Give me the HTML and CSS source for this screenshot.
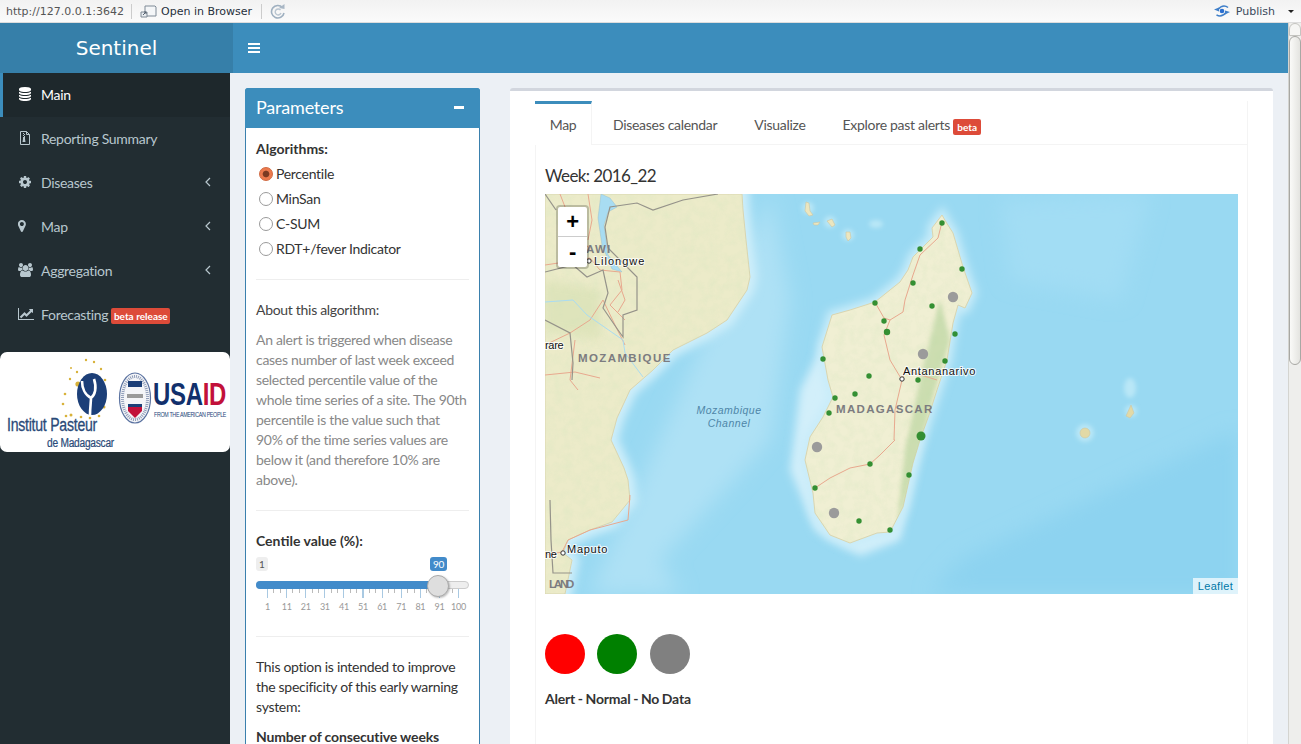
FILE: index.html
```html
<!DOCTYPE html>
<html lang="en">
<head>
  <meta charset="UTF-8" />
  <title>Sentinel</title>
  <link rel="stylesheet" href="styles.css">
</head>
<body>
  <div class="toolbar">
    <span class="tb-url">http://127.0.0.1:3642</span>
    <span class="tb-sep"></span>
    <svg class="tb-open" viewBox="0 0 17 14"><path d="M5 2h10l1 1v9H5z" fill="#f4f6f8" stroke="#7f8a96"/><path d="M1 8h6v5H1z" fill="#e8ecf0" stroke="#7f8a96"/><path d="M3 11l3-3M4 8h2v2" fill="none" stroke="#566270"/></svg>
    <span class="tb-label">Open in Browser</span>
    <span class="tb-sep tb-sep-2"></span>
    <svg class="tb-refresh" viewBox="0 0 16 16"><path d="M12.5 4.500A6.300 6.300 0 1 0 14 10" fill="none" stroke="#9fb0c0" stroke-width="1.600"/><path d="M10.500 7A3 3 0 1 0 11 10" fill="none" stroke="#b9c5d0" stroke-width="1.400"/><path d="M9 5l5.500 1V1z" fill="#a9b7c5"/></svg>
    <span class="tb-spacer"></span>
    <svg class="tb-publish" viewBox="0 0 16 12"><path d="M4 4.500C6 2 8 1 10 1c2 0 3 .6 4 1.500" fill="none" stroke="#3f7fc9" stroke-width="1.500"/><path d="M0 4.500L5 2.500V6.500z" fill="#3f7fc9"/><path d="M12 7.500C10 10 8 11 6 11c-1.500 0-2.500-.5-3.500-1.200" fill="none" stroke="#3f7fc9" stroke-width="1.500"/><path d="M16 7L11 5.500V9.500z" fill="#3f7fc9"/><circle cx="8" cy="6" r="2.300" fill="#2a6fd0"/></svg>
    <span class="tb-label tb-publish-label">Publish</span>
    <span class="tb-caret"></span>
  </div>

  <div class="shell">
    <div class="page">
      <header class="topbar">
        <div class="brand">Sentinel</div>
        <div class="navbar">
          <svg class="burger" viewBox="0 0 12 10"><path d="M0 0h12v2H0zM0 4h12v2H0zM0 8h12v2H0z" fill="#fff"/></svg>
        </div>
      </header>

      <div class="columns">
        <aside class="sidebar">
          <ul class="menu">
            <li class="menu-item active">
              <svg class="ico" viewBox="0 0 1792 1792"><path d="M896 768q237 0 443-43t325-127v170q0 69-103 128t-280 93.500-385 34.500-385-34.500-280-93.500-103-128v-170q119 84 325 127t443 43zm0 768q237 0 443-43t325-127v170q0 69-103 128t-280 93.500-385 34.500-385-34.500-280-93.500-103-128v-170q119 84 325 127t443 43zm0-384q237 0 443-43t325-127v170q0 69-103 128t-280 93.500-385 34.500-385-34.500-280-93.500-103-128v-170q119 84 325 127t443 43zm0-1152q208 0 385 34.500t280 93.500 103 128v128q0 69-103 128t-280 93.500-385 34.500-385-34.500-280-93.500-103-128v-128q0-69 103-128t280-93.500 385-34.500z"/></svg>
              <span>Main</span>
            </li>
            <li class="menu-item">
              <svg class="ico" viewBox="0 0 14 14"><path d="M2.500.5h6l3 3v10h-9z" fill="none" stroke="currentColor"/><path d="M8.500.5v3h3" fill="none" stroke="currentColor"/><path d="M5 2h1v1H5zM6 3h1v1H6zM5 4h1v1H5zM6 5h1v1H6zM5 6h2v2l.5 3h-3L5 8z"/></svg>
              <span>Reporting Summary</span>
            </li>
            <li class="menu-item">
              <svg class="ico" viewBox="0 0 1792 1792"><path d="M1152 896q0-106-75-181t-181-75-181 75-75 181 75 181 181 75 181-75 75-181zm512-109v222q0 12-8 23t-20 13l-185 28q-19 54-39 91 35 50 107 138 10 12 10 25t-9 23q-27 37-99 108t-94 71q-12 0-26-9l-138-108q-44 23-91 38-16 136-29 186-7 28-36 28h-222q-14 0-24.500-8.500t-11.500-21.500l-28-184q-49-16-90-37l-141 107q-10 9-25 9-14 0-25-11-126-114-165-168-7-10-7-23 0-12 8-23 15-21 51-66.500t54-70.500q-27-50-41-99l-183-27q-13-2-21-12.500t-8-23.500v-222q0-12 8-23t19-13l186-28q14-46 39-92-40-57-107-138-10-12-10-24 0-10 9-23 26-36 98.500-107.500t94.500-71.500q13 0 26 10l138 107q44-23 91-38 16-136 29-186 7-28 36-28h222q14 0 24.500 8.500t11.500 21.500l28 184q49 16 90 37l142-107q9-9 24-9 13 0 25 10 129 119 165 170 7 8 7 22 0 12-8 23-15 21-51 66.500t-54 70.500q26 50 41 98l183 28q13 2 21 12.500t8 23.500z"/></svg>
              <span>Diseases</span>
              <svg class="chev" viewBox="0 0 6 10"><path d="M5 1L1 5l4 4" fill="none" stroke="currentColor" stroke-width="1.200"/></svg>
            </li>
            <li class="menu-item">
              <svg class="ico" viewBox="0 0 1792 1792"><path d="M1152 640q0-106-75-181t-181-75-181 75-75 181 75 181 181 75 181-75 75-181zm256 0q0 109-33 179l-364 774q-16 33-47.500 52t-67.500 19-67.500-19-46.500-52l-365-774q-33-70-33-179 0-212 150-362t362-150 362 150 150 362z" transform="translate(-400 0)"/></svg>
              <span>Map</span>
              <svg class="chev" viewBox="0 0 6 10"><path d="M5 1L1 5l4 4" fill="none" stroke="currentColor" stroke-width="1.200"/></svg>
            </li>
            <li class="menu-item">
              <svg class="ico ico-wide" viewBox="0 0 1920 1792"><path d="M529 896q-162 5-265 128h-134q-82 0-138-40.500t-56-118.500q0-353 124-353 6 0 43.500 21t97.500 42.500 119 21.500q67 0 133-23-5 37-5 66 0 139 81 256zm1071 637q0 120-73 189.500t-194 69.500h-874q-121 0-194-69.500t-73-189.500q0-53 3.500-103.500t14-109 26.500-108.500 43-97.500 62-81 85.500-53.500 111.500-20q10 0 43 21.500t73 48 107 48 135 21.500 135-21.500 107-48 73-48 43-21.500q61 0 111.500 20t85.500 53.500 62 81 43 97.500 26.500 108.500 14 109 3.500 103.500zm-1024-1277q0 106-75 181t-181 75-181-75-75-181 75-181 181-75 181 75 75 181zm704 384q0 159-112.500 271.500t-271.500 112.500-271.500-112.500-112.500-271.500 112.500-271.500 271.500-112.500 271.500 112.500 112.500 271.500zm576 225q0 78-56 118.500t-138 40.500h-134q-103-123-265-128 81-117 81-256 0-29-5-66 66 23 133 23 59 0 119-21.500t97.500-42.500 43.500-21q124 0 124 353zm-128-609q0 106-75 181t-181 75-181-75-75-181 75-181 181-75 181 75 75 181z"/></svg>
              <span>Aggregation</span>
              <svg class="chev" viewBox="0 0 6 10"><path d="M5 1L1 5l4 4" fill="none" stroke="currentColor" stroke-width="1.200"/></svg>
            </li>
            <li class="menu-item">
              <svg class="ico ico-wide" viewBox="0 0 2048 1792"><path d="M2048 1536v128h-2048v-1536h128v1408h1920zm-128-1248v435q0 21-19.500 29.500t-35.500-7.500l-121-121-633 633q-10 10-23 10t-23-10l-233-233-416 416-192-192 585-585q10-10 23-10t23 10l233 233 464-464-121-121q-16-16-7.500-35.500t29.500-19.500h435q14 0 23 9t9 23z"/></svg>
              <span>Forecasting</span>
              <span class="badge badge-menu">beta release</span>
            </li>
          </ul>

          <div class="logos">
            <svg class="logos-art" viewBox="0 0 230 100">
              <g fill="#d8b23a">
                <circle cx="70" cy="27" r="1.200"/><circle cx="77" cy="20" r="1.200"/><circle cx="86" cy="8" r="1.200"/><circle cx="94" cy="10" r="1.200"/><circle cx="101" cy="17" r="1.200"/><circle cx="105" cy="28" r="1.300"/><circle cx="65" cy="42" r="1.300"/><circle cx="63" cy="52" r="1.300"/><circle cx="66" cy="64" r="1.300"/><circle cx="71" cy="63" r="1.500"/><circle cx="81" cy="65" r="1.300"/><circle cx="90" cy="66" r="1.300"/><circle cx="99" cy="64" r="1.300"/><circle cx="104" cy="55" r="1.500"/><circle cx="78" cy="32" r="2.600"/><circle cx="71" cy="16" r="1"/>
              </g>
              <ellipse cx="92" cy="42" rx="15" ry="21" fill="#1c3f78"/>
              <path d="M90 63C90 56 91 50 91 46C85 43 82 36 82 29M91 46c4-3 6-10 3-19" fill="none" stroke="#fff" stroke-width="2.600"/>
              <text class="logo-ip" x="7" y="79" textLength="90" lengthAdjust="spacingAndGlyphs">Institut Pasteur</text>
              <text class="logo-dm" x="47" y="94.500" textLength="67" lengthAdjust="spacingAndGlyphs">de Madagascar</text>
              <ellipse cx="135" cy="46" rx="15.500" ry="25" fill="#f4f5f8" stroke="#5a72a0" stroke-width="1.200"/>
              <ellipse cx="135" cy="46" rx="12.500" ry="21.500" fill="none" stroke="#8f9db8" stroke-width="3" stroke-dasharray="1 1"/>
              <rect x="128" y="29" width="14" height="6" fill="#1c3f78"/>
              <rect x="127" y="42" width="16" height="4" fill="#9a9a9a"/>
              <path d="M128 54h14v5l-7 7-7-7z" fill="#c2113a"/>
              <path d="M128 52h14v3h-14z" fill="#1c3f78"/>
              <text class="logo-usaid" transform="translate(153 53) scale(1 1.330)" textLength="73" lengthAdjust="spacingAndGlyphs"><tspan class="logo-usa">USA</tspan><tspan class="logo-id">ID</tspan></text>
              <text class="logo-from" transform="translate(154 65) scale(1 1.300)" textLength="72" lengthAdjust="spacingAndGlyphs">FROM THE AMERICAN PEOPLE</text>
            </svg>
          </div>
        </aside>

        <main class="content">
          <section class="panel">
            <div class="panel-head">
              <span>Parameters</span>
              <span class="panel-minus"></span>
            </div>
            <div class="panel-body">
              <div class="field-label">Algorithms:</div>
              <div class="radio radio-first checked"><i></i>Percentile</div>
              <div class="radio"><i></i>MinSan</div>
              <div class="radio"><i></i>C-SUM</div>
              <div class="radio"><i></i>RDT+/fever Indicator</div>
              <hr class="rule rule-first">
              <p class="about-title">About this algorithm:</p>
              <p class="about-text">An alert is triggered when disease cases number of last week exceed selected percentile value of the whole time series of a site. The 90th percentile is the value such that 90% of the time series values are below it (and therefore 10% are above).</p>
              <hr class="rule rule-second">
              <div class="field-label">Centile value (%):</div>
              <div class="slider">
                <div class="slider-badges">
                  <span class="slider-min">1</span>
                  <span class="slider-val">90</span>
                </div>
                <div class="slider-track">
                  <div class="slider-fill"></div>
                  <div class="slider-handle"></div>
                </div>
                <div class="slider-ticks"></div>
                <div class="slider-scale">
                  <span>1</span><span>11</span><span>21</span><span>31</span><span>41</span><span>51</span><span>61</span><span>71</span><span>81</span><span>91</span><span>100</span>
                </div>
              </div>
              <hr class="rule rule-third">
              <p class="option-text">This option is intended to improve the specificity of this early warning system:</p>
              <div class="field-label option-label">Number of consecutive weeks</div>
            </div>
          </section>

          <section class="main-box">
            <div class="tabs-box">
              <ul class="tabs">
                <li class="tab active">Map</li>
                <li class="tab">Diseases calendar</li>
                <li class="tab">Visualize</li>
                <li class="tab">Explore past alerts<span class="badge badge-tab">beta</span></li>
              </ul>
              <div class="tab-pane">
                <h3 class="week">Week: 2016_22</h3>
                <div class="map">
                  <svg class="map-art" viewBox="545 194 693 400">
                    <defs>
                      <filter id="soft" x="-20%" y="-20%" width="140%" height="140%"><feGaussianBlur stdDeviation="4"/></filter>
                      <filter id="softer" x="-30%" y="-30%" width="160%" height="160%"><feGaussianBlur stdDeviation="10"/></filter>
                      <filter id="thin" x="-30%" y="-30%" width="160%" height="160%"><feGaussianBlur stdDeviation="2"/></filter>
                      <filter id="mottle" x="0" y="0" width="100%" height="100%">
                        <feTurbulence type="fractalNoise" baseFrequency="0.11" numOctaves="3" seed="4"/>
                        <feColorMatrix values="0 0 0 0 0.66  0 0 0 0 0.79  0 0 0 0 0.52  1.600 0 0 0 -0.600"/>
                      </filter>
                      <path id="africa" d="M545 194H742L743 210 746 240 750 277 747 290 727 320 707 333 673 350 653 370 630 390 617 418 611 440 624 468 628 480 630 500 612 522 590 530 568 540 563 553 572 560 565 594H545Z"/>
                      <path id="mada" d="M942 215L946 222 953 233 958 250 963 267 972 293 965 308 958 305 953 323 947 360 937 390 929 415 920 440 913 463 903 507 890 532 877 533 850 543 830 535 815 513 813 493 805 460 810 437 823 417 833 397 828 380 822 347 832 315 850 310 875 302 900 282 908 270 913 257 920 250 933 237 932 228Z"/>
                      <clipPath id="land-clip"><use href="#africa"/><use href="#mada"/></clipPath>
                    </defs>

                    <rect x="545" y="194" width="693" height="400" fill="#99d9f2"/>
                    <path d="M960 560L1238 430V594H930Z" fill="#8dd3f0" filter="url(#softer)"/>
                    <path d="M1000 200L1150 194 1120 300 1010 280Z" fill="#a2ddf4" filter="url(#softer)"/>
                    <path d="M770 194L790 300 770 440 660 560 680 594H590Z" fill="#aee1f5" filter="url(#softer)"/>
                    <use href="#africa" fill="#d5f0fa" stroke="#cdeefa" stroke-width="14" filter="url(#soft)"/>
                    <path d="M830 330L800 390 790 470 815 530 860 556 900 540 925 430 900 330Z" fill="#d2effa" filter="url(#soft)"/>
                    <use href="#mada" fill="#d8f2fb" stroke="#c8ecf9" stroke-width="10" filter="url(#soft)"/>
                    <g fill="#b9e7f7" filter="url(#thin)">
                      <circle cx="808" cy="208" r="6"/><circle cx="830" cy="222" r="6"/><circle cx="848" cy="235" r="6"/><ellipse cx="876" cy="224" rx="7" ry="4"/><circle cx="1085" cy="433" r="9"/><circle cx="1131" cy="411" r="6"/><ellipse cx="1130" cy="388" rx="6" ry="10"/>
                    </g>

                    <g stroke="#d9d5b0" stroke-width="1">
                      <use href="#africa" fill="#ecebc9"/>
                      <use href="#mada" fill="#f0efd3"/>
                    </g>
                    <g clip-path="url(#land-clip)">
                      <rect x="545" y="194" width="693" height="400" filter="url(#mottle)" opacity=".35"/>
                      <path d="M940 300L950 340 932 400 915 470 897 525 905 450 920 380Z" fill="#bcd6a2" filter="url(#thin)" opacity=".7"/>
                      <path d="M545 280L600 290 600 340 545 330Z" fill="#d6e0b2" filter="url(#soft)" opacity=".6"/>
                    </g>

                    <g fill="#ece6bf" stroke="#c9c6a4" stroke-width=".6">
                      <path d="M806 202l3 1 1 8 3 4-4 1-4-5z"/><path d="M813 223l7-1-2 3h-4z"/><path d="M827 221l5-2 3 6-3 2z"/><path d="M846 232l4 0 1 6-3 3-2-4z"/>
                      <circle cx="1085" cy="433" r="5" fill="#e2d9a6"/><path d="M1131 405l3 8-4 5-4-2z" fill="#e2d9a6"/>
                    </g>

                    <path d="M601 194L610 198 617 207 608 212 604 225 608 255 622 272 612 269 602 245 598 218Z" fill="#a8dcf2" stroke="#90b8c8" stroke-width=".4"/>

                    <g fill="none" stroke="#e8a88e" stroke-width="1">
                      <path d="M545 265L565 262 590 258 600 270 620 272 622 290 610 305 625 320"/>
                      <path d="M560 194L572 225 590 250"/>
                      <path d="M588 194L592 220 588 240"/>
                      <path d="M603 300L615 325 625 345"/>
                      <path d="M545 345L570 333 590 320 603 300"/>
                      <path d="M575 340L570 380 578 390"/>
                      <path d="M618 280L625 300 618 312"/>
                      <path d="M545 375L575 372 600 378"/>
                      <path d="M630 495L628 520 590 530 568 540 562 552 545 555"/>
                      <path d="M942 222L938 238 920 255 913 275 905 300 903 312 890 320 884 335 890 360 902 380 905 370 937 380"/>
                      <path d="M876 304L884 318 890 320"/>
                      <path d="M902 380L895 410 894 440 895 440 880 455 870 464 850 468 830 478 815 488"/>
                    </g>
                    <g fill="none" stroke="#95938a" stroke-width="1.200">
                      <path d="M718 194L683 200 653 210 637 203 610 207 605 227 608 248 637 277 637 310 623 315 623 337 618 330 603 308 608 293 603 270 587 277 573 265 545 272"/>
                      <path d="M545 320L570 333 573 363 572 380"/>
                      <path d="M550 500L551 540 553 573 572 573"/>
                      <path d="M545 194L556 210"/>
                    </g>
                    <path d="M545 302L573 300 587 315 623 340 625 353 643 377" fill="none" stroke="#a9dcf2" stroke-width="1"/>

                    <g class="map-country">
                      <text x="578" y="362" textLength="92">MOZAMBIQUE</text>
                      <text x="836" y="413" textLength="96">MADAGASCAR</text>
                      <text x="586" y="253" textLength="24">AWI</text>
                      <text x="549" y="588" textLength="25">LAND</text>
                    </g>
                    <g class="map-sea">
                      <text x="729" y="414">Mozambique</text>
                      <text x="729" y="427">Channel</text>
                    </g>
                    <g class="map-city">
                      <text x="594" y="265" textLength="50">Lilongwe</text>
                      <text x="903" y="375" textLength="72">Antananarivo</text>
                      <text x="567" y="553" textLength="40">Maputo</text>
                      <text x="545" y="349">rare</text>
                      <text x="545" y="558">ne</text>
                    </g>
                    <g fill="#fff" stroke="#333" stroke-width="1">
                      <circle cx="589" cy="261" r="2.200"/><circle cx="902" cy="379" r="2.200"/><circle cx="563" cy="553" r="2.200"/>
                    </g>

                    <g fill="#2a8a2a" fill-opacity=".95">
                      <circle cx="942" cy="223" r="2.700"/><circle cx="920" cy="249" r="2.700"/><circle cx="962" cy="269" r="2.700"/><circle cx="913" cy="283" r="2.700"/><circle cx="932" cy="306" r="2.700"/><circle cx="875" cy="303" r="2.700"/><circle cx="884" cy="321" r="2.700"/><circle cx="887" cy="332" r="3.200"/><circle cx="955" cy="334" r="2.700"/><circle cx="823" cy="359" r="2.700"/><circle cx="869" cy="376" r="2.700"/><circle cx="945" cy="361" r="2.700"/><circle cx="918" cy="380" r="2.700"/><circle cx="835" cy="398" r="2.700"/><circle cx="855" cy="394" r="2.700"/><circle cx="829" cy="413" r="2.700"/><circle cx="921" cy="436" r="4.500"/><circle cx="870" cy="464" r="2.700"/><circle cx="909" cy="475" r="2.700"/><circle cx="815" cy="488" r="2.700"/><circle cx="859" cy="521" r="2.700"/><circle cx="890" cy="530" r="2.700"/>
                    </g>
                    <g fill="#9b9b9b">
                      <circle cx="953" cy="297" r="5.200"/><circle cx="923" cy="354" r="5.200"/><circle cx="817" cy="447" r="5.200"/><circle cx="834" cy="513" r="5.200"/>
                    </g>
                  </svg>
                  <div class="zoom-ctl">
                    <div class="zoom-btn zoom-in">+</div>
                    <div class="zoom-btn">-</div>
                  </div>
                  <div class="attribution">Leaflet</div>
                </div>
                <div class="legend">
                  <span class="dot dot-red"></span>
                  <span class="dot dot-green"></span>
                  <span class="dot dot-grey"></span>
                </div>
                <div class="legend-text">Alert - Normal - No Data</div>
              </div>
            </div>
          </section>
        </main>
      </div>
    </div>

    <div class="scrollbar">
      <div class="scroll-up"></div>
      <div class="scroll-thumb"></div>
    </div>
  </div>
</body>
</html>
```

FILE: styles.css
```css
* {
  box-sizing: border-box;
}
html, body {
  margin: 0;
  height: 100%;
  overflow: hidden;
}
body {
  font-family: Lato, "Noto Sans", sans-serif;
  font-size: 14px;
  letter-spacing: -.3px;
  color: #333;
  background: #ecf0f5;
}

/* viewer toolbar */
.toolbar {
  height: 23px;
  display: flex;
  align-items: center;
  padding: 0 0 0 6px;
  font-family: "DejaVu Sans", sans-serif;
  font-size: 11px;
  letter-spacing: 0;
  background: linear-gradient(#f2f2f2, #fbfbfb);
  border-bottom: 1px solid #ddd;
}
.tb-url {
  color: #555;
  width: 125px;
}
.tb-sep {
  width: 1px;
  height: 15px;
  background: #ccc;
}
.tb-open {
  width: 17px;
  height: 14px;
  margin: 0 4px 0 8px;
}
.tb-label {
  color: #26303c;
}
.tb-sep-2 {
  margin-left: 9px;
}
.tb-refresh {
  width: 16px;
  height: 16px;
  margin-left: 8px;
}
.tb-spacer {
  flex: 1;
}
.tb-publish {
  width: 16px;
  height: 12px;
  margin-right: 6px;
}
.tb-publish-label {
  color: #3a4a5c;
}
.tb-caret {
  width: 0;
  height: 0;
  margin: 0 7px 0 13px;
  border-left: 3px solid transparent;
  border-right: 3px solid transparent;
  border-top: 3px solid #222;
}

.shell {
  display: flex;
  height: 721px;
}
.page {
  flex: 1;
  min-width: 0;
  overflow: hidden;
}

/* scrollbar */
.scrollbar {
  width: 13px;
  background: #eeeeec;
  border-left: 1px solid #d4d4d0;
}
.scroll-up {
  height: 13px;
  background: #f6f6f4;
  border: 1px solid #c4c4c0;
  border-radius: 6px 6px 0 0;
}
.scroll-thumb {
  height: 329px;
  background: linear-gradient(90deg, #fafaf8, #e4e4e0);
  border: 1px solid #a8a8a4;
  border-radius: 6px;
}

/* header */
.topbar {
  display: flex;
  height: 50px;
  background: #3c8dbc;
}
.brand {
  width: 233px;
  padding-bottom: 2px;
  line-height: 50px;
  text-align: center;
  font-family: "DejaVu Sans", sans-serif;
  font-size: 20px;
  letter-spacing: 0;
  color: #fff;
  background: #367fa9;
}
.navbar {
  flex: 1;
  display: flex;
  align-items: center;
  padding-left: 15px;
  padding-bottom: 1px;
}
.burger {
  width: 12px;
  height: 10px;
}

.columns {
  display: flex;
  height: 671px;
}

/* sidebar */
.sidebar {
  width: 230px;
  flex: none;
  background: #222d32;
}
.menu {
  list-style: none;
  margin: 0;
  padding: 0;
}
.menu-item {
  display: flex;
  align-items: center;
  height: 44px;
  padding-left: 18px;
  padding-bottom: 2px;
  color: #b8c7ce;
}
.menu-item.active {
  padding-left: 15px;
  border-left: 3px solid #3c8dbc;
  background: #1e282c;
  color: #fff;
}
.ico {
  width: 14px;
  height: 14px;
  margin-right: 9px;
  fill: currentColor;
  flex: none;
}
.ico-wide {
  width: 16px;
  margin-right: 7px;
}
.chev {
  width: 6px;
  height: 10px;
  margin-left: auto;
  margin-right: 19px;
}
.badge {
  display: inline-block;
  color: #fff;
  background: #dd4b39;
  font-weight: 700;
  border-radius: 2px;
  font-size: 10px;
  letter-spacing: 0;
  line-height: 16px;
  height: 16px;
  text-align: center;
}
.badge-menu {
  width: 59px;
  margin-left: 3px;
  margin-top: 4px;
}
.badge-tab {
  width: 28px;
  margin-left: 3px;
  vertical-align: -1px;
}
.logos {
  height: 100px;
  margin-top: 15px;
  background: #fff;
  border-radius: 7px;
}
.logos-art {
  display: block;
  width: 230px;
  height: 100px;
}
.logo-ip {
  font: 400 18px "Liberation Sans", sans-serif;
  fill: #2a4a78;
  stroke: #2a4a78;
  stroke-width: .3px;
}
.logo-dm {
  font: 400 12px "Liberation Sans", sans-serif;
  fill: #2a4a78;
  stroke: #2a4a78;
  stroke-width: .2px;
}
.logo-usaid {
  font: 700 24px "Liberation Sans", sans-serif;
}
.logo-usa {
  fill: #12306c;
}
.logo-id {
  fill: #c2113a;
}
.logo-from {
  font: 400 5px "Liberation Sans", sans-serif;
  fill: #1c3f78;
}

/* main column */
.content {
  flex: 1;
  min-width: 0;
  display: flex;
  align-items: flex-start;
  gap: 30px;
  padding: 15px 15px 0;
}
.panel {
  width: 235px;
  flex: none;
  background: #fff;
  border: 1px solid #3a80ad;
  border-radius: 3px;
}
.panel-head {
  display: flex;
  align-items: center;
  justify-content: space-between;
  height: 40px;
  margin: -1px -1px 0;
  padding: 0 16px 2px 11px;
  background: #3c8dbc;
  color: #fff;
  font-size: 18px;
  letter-spacing: -.2px;
  border-radius: 3px 3px 0 0;
}
.panel-minus {
  width: 10px;
  height: 3px;
  background: #fff;
}
.panel-body {
  padding: 11px 10px 0;
}
.field-label {
  font-weight: 700;
  letter-spacing: 0;
  line-height: 20px;
}
.radio {
  display: flex;
  align-items: center;
  height: 25px;
  padding-left: 3px;
}
.radio-first {
  margin-top: 2px;
}
.radio i {
  width: 14px;
  height: 14px;
  margin-right: 3px;
  border: 1px solid #9a9a9a;
  border-radius: 50%;
  background: #fff;
}
.radio.checked i {
  border-color: #d0683f;
  background: radial-gradient(circle, #7a3a22 0 2.800px, #ec7a4e 3.800px);
}
.rule {
  margin: 0;
  border: 0;
  border-top: 1px solid #eee;
}
.rule-first {
  margin-top: 18px;
}
.about-title {
  margin: 20px 0 0;
  line-height: 20px;
  color: #444;
}
.about-text {
  margin: 10px 0 0;
  line-height: 20px;
  color: #888;
}
.rule-second {
  margin-top: 20px;
}
.rule-second + .field-label {
  margin-top: 20px;
}

/* slider */
.slider {
  position: relative;
  height: 68px;
  margin-top: 6px;
}
.slider-badges {
  display: flex;
  justify-content: space-between;
  height: 14px;
  padding-right: 22px;
  font-size: 10px;
  line-height: 14px;
}
.slider-min {
  padding: 0 3px;
  background: #eee;
  border-radius: 3px;
  color: #555;
}
.slider-val {
  padding: 0 3px;
  background: #428bca;
  border-radius: 3px;
  color: #fff;
  width: 17px;
  text-align: center;
}
.slider-track {
  position: relative;
  height: 8px;
  margin-top: 10px;
  background: #eee;
  border: 1px solid #ccc;
  border-radius: 4px;
}
.slider-fill {
  height: 8px;
  width: 182px;
  margin: -1px;
  background: #428bca;
  border-radius: 4px 0 0 4px;
}
.slider-handle {
  position: absolute;
  left: 170px;
  top: -7px;
  width: 22px;
  height: 22px;
  background: #dedede;
  border: 1px solid #aaa;
  border-radius: 50%;
  box-shadow: 1px 1px 2px rgba(0, 0, 0, .25);
}
.slider-ticks {
  height: 9px;
  margin: 0 10px 0 11px;
  background:
    repeating-linear-gradient(90deg, #a9c9e2 0 1px, transparent 1px 19.100px) 0 0 / 100% 9px no-repeat,
    repeating-linear-gradient(90deg, #bbb 0 1px, transparent 1px 6.370px) 0 0 / 100% 4px no-repeat;
}
.slider-scale {
  display: flex;
  margin: 3px 0 0 2px;
  font-size: 9px;
  line-height: 11px;
  color: #999;
}
.slider-scale span {
  width: 19.100px;
  text-align: center;
}
.rule-third {
  margin-top: 11px;
}
.option-text {
  margin: 20px 0 0;
  line-height: 20px;
}
.option-label {
  margin-top: 10px;
  letter-spacing: -.15px;
}

/* right box */
.main-box {
  width: 763px;
  flex: none;
  height: 700px;
  padding: 10px 25px 0;
  background: #fff;
  border-top: 3px solid #d2d6de;
  border-radius: 3px;
}
.tabs-box {
  height: 690px;
  border-right: 1px solid #f4f4f4;
  border-left: 1px solid #f4f4f4;
}
.tabs {
  list-style: none;
  display: flex;
  height: 44px;
  margin: 0;
  padding: 0;
  border-bottom: 1px solid #f4f4f4;
}
.tab {
  height: 43px;
  padding: 0 18.500px 0;
  line-height: 41px;
  color: #555;
  border-top: 3px solid transparent;
}
.tab.active {
  width: 57px;
  height: 44px;
  padding: 0;
  margin-left: -1px;
  margin-right: 2.500px;
  text-align: center;
  border-top-color: #3c8dbc;
  border-right: 1px solid #f4f4f4;
  background: #fff;
}
.tab-pane {
  padding: 0 9px;
}
.week {
  margin: 21px 0 8px;
  font-size: 17px;
  letter-spacing: -.6px;
  line-height: 20px;
  font-weight: 400;
}
.map {
  position: relative;
  height: 400px;
  overflow: hidden;
}
.map-art {
  display: block;
  width: 693px;
  height: 400px;
}
.map-country text {
  font: 700 11.500px "Liberation Sans", sans-serif;
  fill: #7c7c80;
}
.map-sea text {
  font: italic 400 10.500px "Liberation Sans", sans-serif;
  fill: #4f86a8;
  text-anchor: middle;
  letter-spacing: .5px;
}
.map-city text {
  font: 400 11px "Liberation Sans", sans-serif;
  fill: #111;
  paint-order: stroke;
  stroke: rgba(255, 255, 255, .8);
  stroke-width: 2px;
}
.zoom-ctl {
  position: absolute;
  left: 11px;
  top: 11px;
  width: 33px;
  background: #fff;
  border: 2px solid rgba(0, 0, 0, .2);
  background-clip: padding-box;
  border-radius: 4px;
}
.zoom-btn {
  height: 30px;
  text-align: center;
  font: 700 22px/30px "Liberation Sans", sans-serif;
  color: #000;
}
.zoom-in {
  border-bottom: 1px solid #ccc;
}
.attribution {
  position: absolute;
  right: 0;
  bottom: 0;
  height: 16px;
  padding: 0 5px;
  font: 400 11px/16px "Liberation Sans", sans-serif;
  letter-spacing: .3px;
  color: #0078a8;
  background: rgba(255, 255, 255, .7);
}
.legend {
  display: flex;
  margin-top: 40px;
}
.dot {
  width: 40px;
  height: 40px;
  border-radius: 50%;
  margin-right: 12px;
}
.dot-red {
  background: #f00;
}
.dot-green {
  background: #008000;
  margin-right: 13px;
}
.dot-grey {
  background: #808080;
}
.legend-text {
  margin-top: 15px;
  font-weight: 700;
  letter-spacing: -.2px;
  word-spacing: -.5px;
  line-height: 20px;
}
```
